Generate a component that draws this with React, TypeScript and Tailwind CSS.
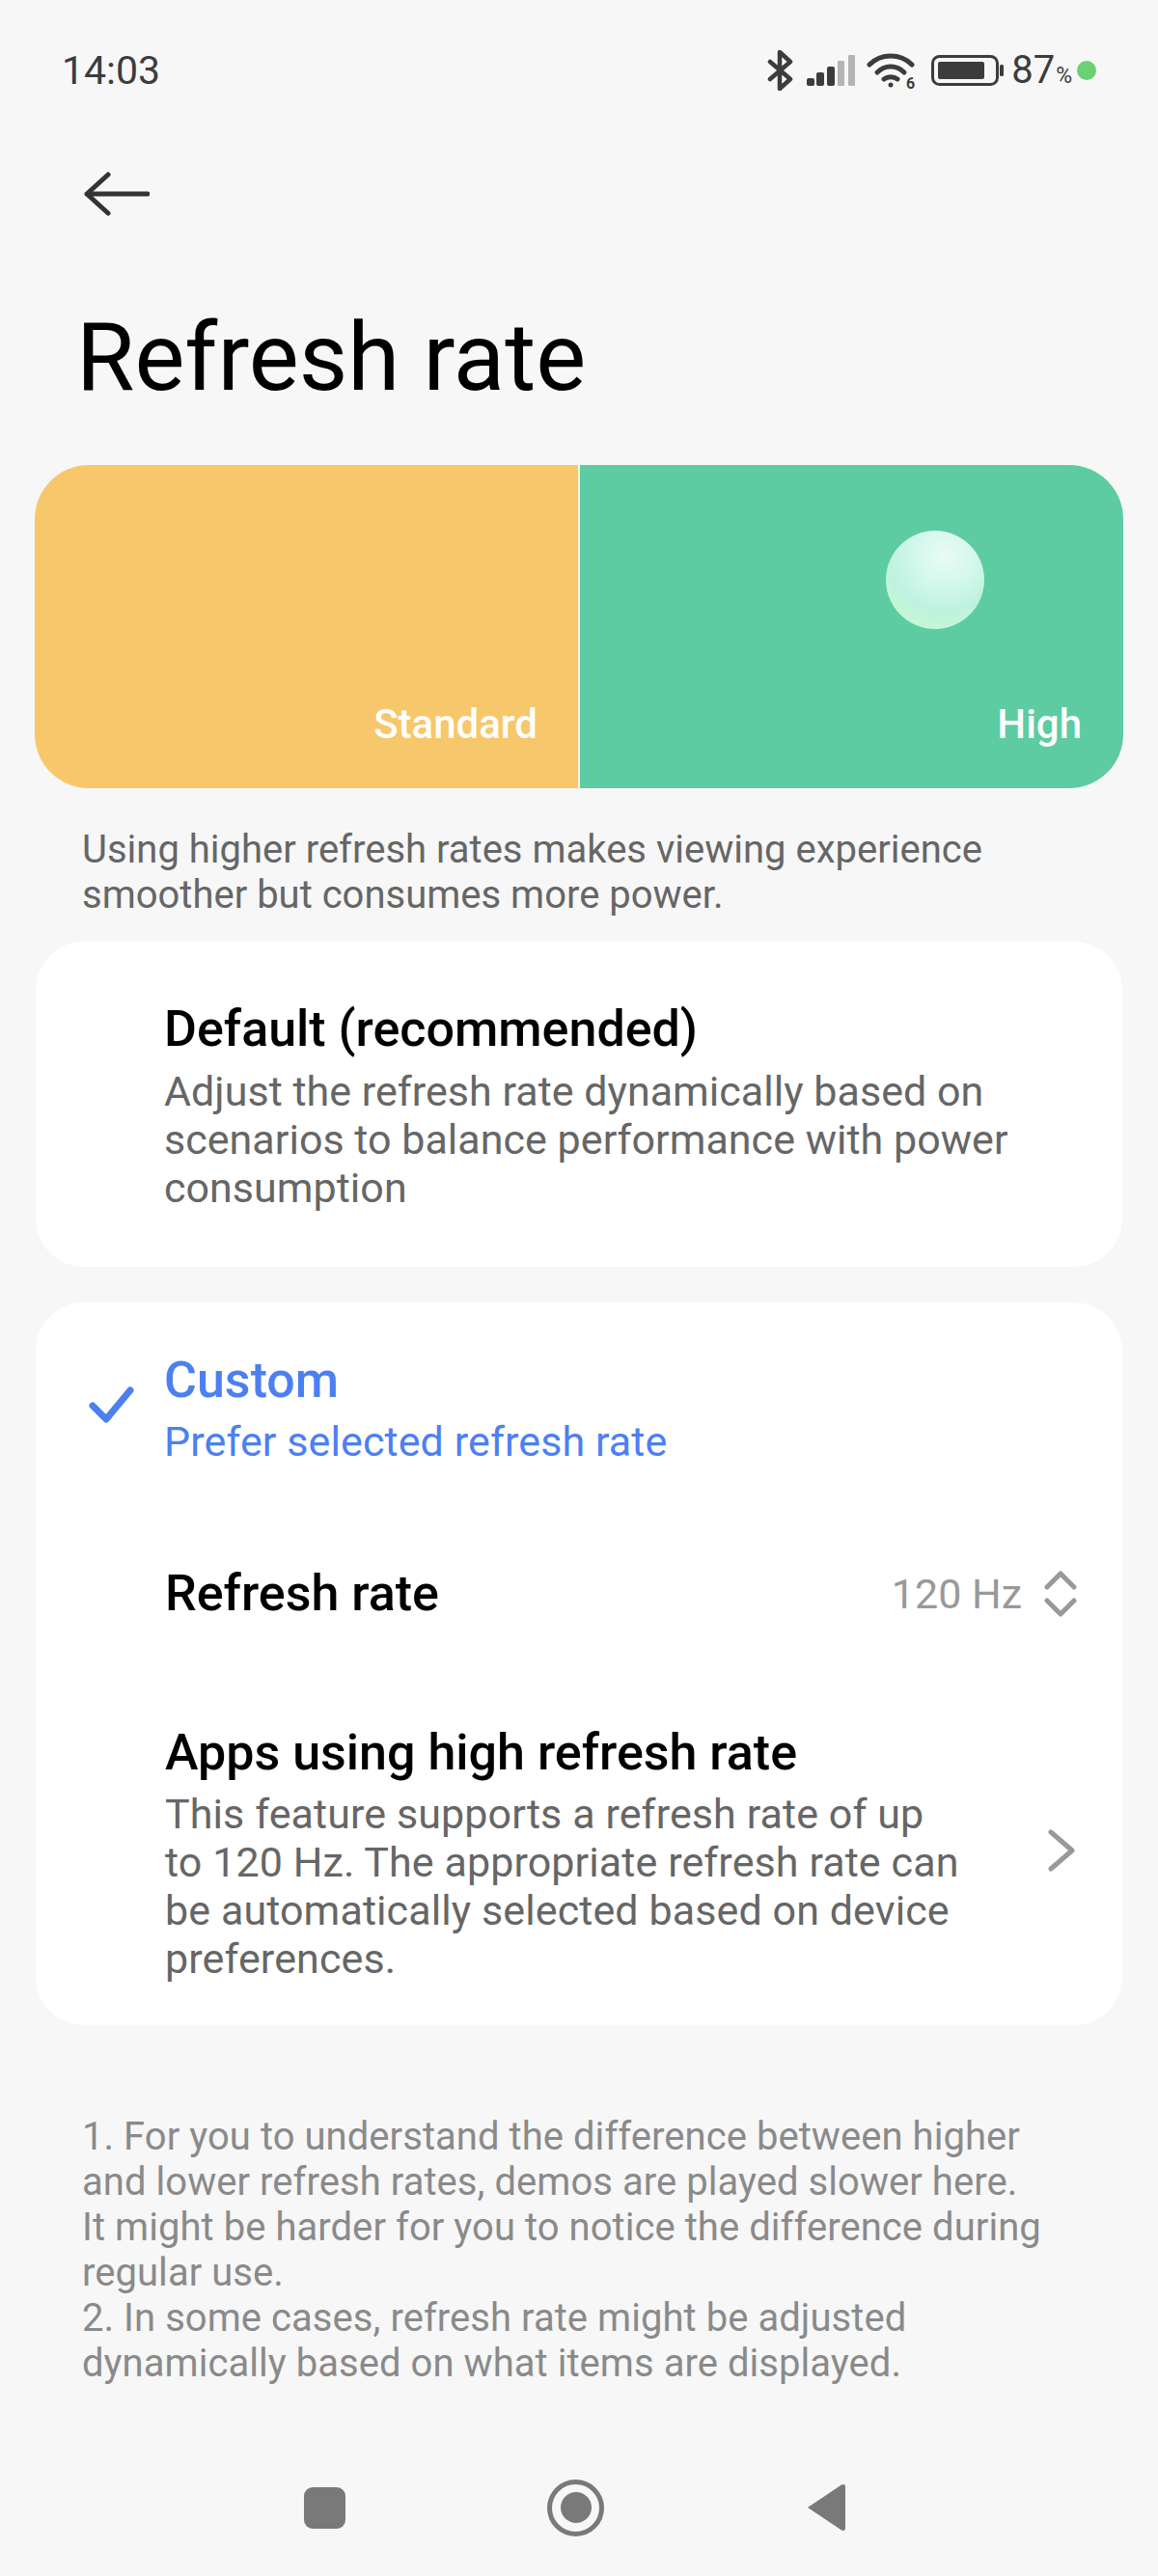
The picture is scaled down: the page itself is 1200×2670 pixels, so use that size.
import type { ReactNode } from "react";

const font = { fontFamily: "Roboto, sans-serif" };

function StatusIcons() {
  return (
    <div className="flex items-center">
      {/* bluetooth */}
      <svg className="ml-[-2px]" width="30" height="42" viewBox="0 0 28 42" fill="none" stroke="#3c3c3c" strokeWidth="4.5" strokeLinecap="round" strokeLinejoin="round">
        <path d="M3 12 L24 30 L13 40 V2 L24 12 L3 30" />
      </svg>
      {/* signal */}
      <svg className="ml-[12px]" width="50" height="32" viewBox="0 0 50 32">
        <rect x="0" y="24" width="8" height="8" rx="2" fill="#3c3c3c" />
        <rect x="10" y="18" width="8" height="14" rx="2" fill="#3c3c3c" />
        <rect x="21" y="12" width="8" height="20" rx="2" fill="#3c3c3c" />
        <rect x="32" y="6" width="7" height="26" rx="1" fill="#b4b4b4" />
        <rect x="43" y="0" width="7" height="32" rx="1" fill="#b4b4b4" />
      </svg>
      {/* wifi */}
      <div className="relative ml-[12px] w-[50px] h-[38px]">
        <svg width="50" height="38" viewBox="0 0 50 38" fill="none" stroke="#3c3c3c" strokeWidth="5" strokeLinecap="round">
          <path d="M3 13 C15 1 35 1 47 13" />
          <path d="M11 21 C19 13 31 13 39 21" />
          <path d="M18 28 C22 25 28 25 32 28" />
          <circle cx="25" cy="34" r="2.5" fill="#3c3c3c" stroke="none" />
        </svg>
        <span className="absolute right-[-1px] bottom-[-2px] text-[16px] leading-[15px] font-bold text-[#3c3c3c] bg-[#f7f7f7] px-[1px]">6</span>
      </div>
      {/* battery */}
      <svg className="ml-[17px]" width="76" height="32" viewBox="0 0 76 32">
        <rect x="1.5" y="1.5" width="67" height="29" rx="7" fill="none" stroke="#3c3c3c" strokeWidth="3" />
        <rect x="7" y="7" width="48" height="18" rx="2" fill="#3c3c3c" />
        <rect x="71" y="10" width="4" height="12" rx="1.5" fill="#3c3c3c" />
      </svg>
      <span className="ml-[7px] text-[40px] leading-[46px] text-[#3c3c3c]">87</span>
      <span className="mt-[12px] ml-[1px] text-[23px] leading-[24px] text-[#3c3c3c]">%</span>
      <span className="ml-[5px] w-[20px] h-[20px] rounded-full bg-[#6cd074]" />
    </div>
  );
}

function RowTitle({ children }: { children: ReactNode }) {
  return <div className="text-[52px] leading-[60px] font-medium text-black">{children}</div>;
}

export default function App() {
  return (
    <div className="w-[1200px] h-[2670px] bg-[#f7f7f7] flex flex-col overflow-hidden" style={font}>
      {/* Status bar */}
      <div className="flex items-center justify-between h-[46px] mt-[50px] pl-[64px] pr-[64px]">
        <span className="text-[41px] leading-[46px] text-[#3c3c3c]">14:03</span>
        <StatusIcons />
      </div>

      {/* Back */}
      <div className="pl-[87px] mt-[80px] h-[50px] flex items-center">
        <svg width="68" height="46" viewBox="0 0 68 46" fill="none" stroke="#333333" strokeWidth="5" strokeLinecap="round" strokeLinejoin="round">
          <path d="M3 23 H66 M25 3 L3 23 L25 43" />
        </svg>
      </div>

      <h1 className="pl-[79px] mt-[89px] text-[98px] leading-[112px] text-black">Refresh rate</h1>

      {/* Demo banner */}
      <div className="relative mx-[36px] mt-[55px] h-[335px] rounded-[56px] overflow-hidden flex text-white text-[42px] leading-[48px] font-medium">
        <div className="w-[563px] bg-[#f7c76b] flex items-end justify-end pr-[42px] pb-[42px]">Standard</div>
        <div className="w-[2px] bg-[#f3f3e4]" />
        <div className="flex-1 bg-[#5dcca2] flex items-end justify-end pr-[43px] pb-[42px]">High</div>
        <div className="absolute left-[882px] top-[68px] w-[102px] h-[102px] rounded-full bg-[radial-gradient(circle_at_60%_25%,#e9fbf4_0%,#d5f8ee_30%,#bdf2de_60%,#c8f8d3_85%,#d0f9d6_100%)]" />
      </div>

      <p className="pl-[85px] mt-[40px] text-[40px] leading-[47px] text-[#666666]">
        Using higher refresh rates makes viewing experience
        <br />
        smoother but consumes more power.
      </p>

      {/* Default card */}
      <div className="mx-[37px] mt-[25px] h-[337px] bg-white rounded-[50px] pl-[133px] pt-[61px]">
        <RowTitle>Default (recommended)</RowTitle>
        <p className="mt-[9px] text-[43px] tracking-[0.03px] leading-[50px] text-[#666666]">
          Adjust the refresh rate dynamically based on
          <br />
          scenarios to balance performance with power
          <br />
          consumption
        </p>
      </div>

      {/* Custom card */}
      <div className="mx-[37px] mt-[37px] h-[749px] bg-white rounded-[50px] flex flex-col">
        <div className="flex pt-[51px] h-[220px]">
          <div className="w-[133px] pl-[55px] pt-[36px]">
            <svg width="48" height="42" viewBox="0 0 48 42" fill="none" stroke="#4c80f1" strokeWidth="7" strokeLinecap="round" strokeLinejoin="round">
              <path d="M4 20 L18 34 L43 4" />
            </svg>
          </div>
          <div>
            <div className="text-[52px] leading-[60px] font-medium text-[#4c80f1]">Custom</div>
            <div className="mt-[8px] text-[43px] tracking-[0.1px] leading-[50px] text-[#4c80f1]">Prefer selected refresh rate</div>
          </div>
        </div>

        <div className="flex items-center justify-between pl-[134px] pr-[47px] h-[60px] mt-[52px]">
          <RowTitle>Refresh rate</RowTitle>
          <div className="flex items-center">
            <span className="text-[43px] leading-[50px] text-[#999999]">120 Hz</span>
            <svg className="ml-[23px]" width="34" height="50" viewBox="0 0 34 50" fill="none" stroke="#999999" strokeWidth="5" strokeLinecap="round" strokeLinejoin="round">
              <path d="M3 18 L17 4 L31 18 M3 32 L17 46 L31 32" />
            </svg>
          </div>
        </div>

        <div className="flex items-center justify-between pl-[134px] pr-[49px] mt-[105px]">
          <div>
            <RowTitle>Apps using high refresh rate</RowTitle>
            <p className="mt-[8px] text-[43px] tracking-[0.1px] leading-[50px] text-[#666666]">
              This feature supports a refresh rate of up
              <br />
              to 120 Hz. The appropriate refresh rate can
              <br />
              be automatically selected based on device
              <br />
              preferences.
            </p>
          </div>
          <svg className="mt-[-6px]" width="28" height="44" viewBox="0 0 28 44" fill="none" stroke="#999999" strokeWidth="5" strokeLinecap="round" strokeLinejoin="round">
            <path d="M3 3 L25 22 L3 41" />
          </svg>
        </div>
      </div>

      {/* Notes */}
      <p className="pl-[85px] mt-[92px] text-[40px] tracking-[0.05px] leading-[47px] text-[#8a8a8a]">
        1. For you to understand the difference between higher
        <br />
        and lower refresh rates, demos are played slower here.
        <br />
        It might be harder for you to notice the difference during
        <br />
        regular use.
        <br />
        2. In some cases, refresh rate might be adjusted
        <br />
        dynamically based on what items are displayed.
      </p>

      {/* Nav bar */}
      <div className="flex items-center pl-[315px] mt-[96px] h-[60px]">
        <span className="w-[43px] h-[43px] rounded-[9px] bg-[#797979]" />
        <span className="ml-[209px] w-[59px] h-[59px] rounded-full border-[5px] border-[#797979] flex items-center justify-center">
          <span className="w-[32px] h-[32px] rounded-full bg-[#797979]" />
        </span>
        <svg className="ml-[209px]" width="43" height="50" viewBox="0 0 43 50">
          <path d="M2 25 L37 1.5 Q41 0 41 4 V46 Q41 50 37 48.5 L2 25 Z" fill="#797979" />
        </svg>
      </div>
    </div>
  );
}
